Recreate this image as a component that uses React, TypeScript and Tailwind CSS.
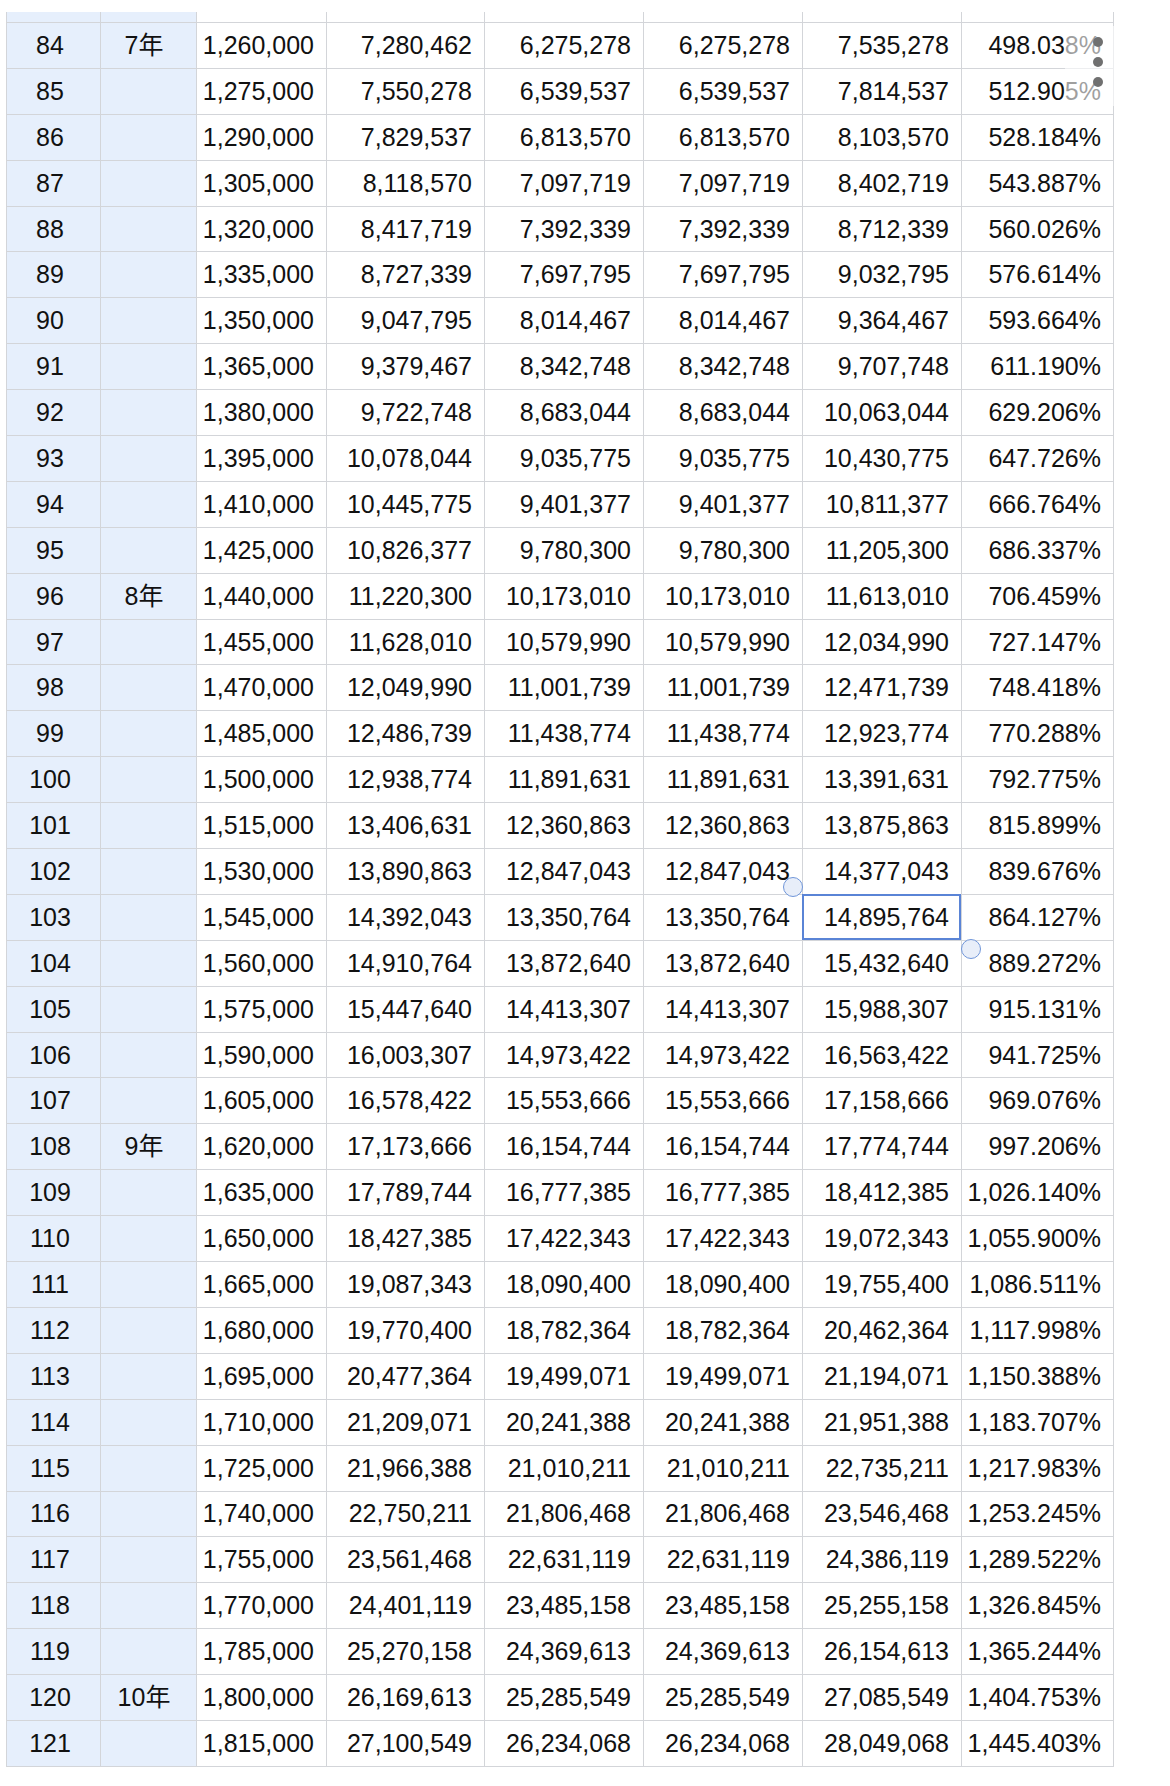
import React from "react";

const rows: [string, string, string, string, string, string, string, string][] = [
  ["84", "7年", "1,260,000", "7,280,462", "6,275,278", "6,275,278", "7,535,278", "498.038%"],
  ["85", "", "1,275,000", "7,550,278", "6,539,537", "6,539,537", "7,814,537", "512.905%"],
  ["86", "", "1,290,000", "7,829,537", "6,813,570", "6,813,570", "8,103,570", "528.184%"],
  ["87", "", "1,305,000", "8,118,570", "7,097,719", "7,097,719", "8,402,719", "543.887%"],
  ["88", "", "1,320,000", "8,417,719", "7,392,339", "7,392,339", "8,712,339", "560.026%"],
  ["89", "", "1,335,000", "8,727,339", "7,697,795", "7,697,795", "9,032,795", "576.614%"],
  ["90", "", "1,350,000", "9,047,795", "8,014,467", "8,014,467", "9,364,467", "593.664%"],
  ["91", "", "1,365,000", "9,379,467", "8,342,748", "8,342,748", "9,707,748", "611.190%"],
  ["92", "", "1,380,000", "9,722,748", "8,683,044", "8,683,044", "10,063,044", "629.206%"],
  ["93", "", "1,395,000", "10,078,044", "9,035,775", "9,035,775", "10,430,775", "647.726%"],
  ["94", "", "1,410,000", "10,445,775", "9,401,377", "9,401,377", "10,811,377", "666.764%"],
  ["95", "", "1,425,000", "10,826,377", "9,780,300", "9,780,300", "11,205,300", "686.337%"],
  ["96", "8年", "1,440,000", "11,220,300", "10,173,010", "10,173,010", "11,613,010", "706.459%"],
  ["97", "", "1,455,000", "11,628,010", "10,579,990", "10,579,990", "12,034,990", "727.147%"],
  ["98", "", "1,470,000", "12,049,990", "11,001,739", "11,001,739", "12,471,739", "748.418%"],
  ["99", "", "1,485,000", "12,486,739", "11,438,774", "11,438,774", "12,923,774", "770.288%"],
  ["100", "", "1,500,000", "12,938,774", "11,891,631", "11,891,631", "13,391,631", "792.775%"],
  ["101", "", "1,515,000", "13,406,631", "12,360,863", "12,360,863", "13,875,863", "815.899%"],
  ["102", "", "1,530,000", "13,890,863", "12,847,043", "12,847,043", "14,377,043", "839.676%"],
  ["103", "", "1,545,000", "14,392,043", "13,350,764", "13,350,764", "14,895,764", "864.127%"],
  ["104", "", "1,560,000", "14,910,764", "13,872,640", "13,872,640", "15,432,640", "889.272%"],
  ["105", "", "1,575,000", "15,447,640", "14,413,307", "14,413,307", "15,988,307", "915.131%"],
  ["106", "", "1,590,000", "16,003,307", "14,973,422", "14,973,422", "16,563,422", "941.725%"],
  ["107", "", "1,605,000", "16,578,422", "15,553,666", "15,553,666", "17,158,666", "969.076%"],
  ["108", "9年", "1,620,000", "17,173,666", "16,154,744", "16,154,744", "17,774,744", "997.206%"],
  ["109", "", "1,635,000", "17,789,744", "16,777,385", "16,777,385", "18,412,385", "1,026.140%"],
  ["110", "", "1,650,000", "18,427,385", "17,422,343", "17,422,343", "19,072,343", "1,055.900%"],
  ["111", "", "1,665,000", "19,087,343", "18,090,400", "18,090,400", "19,755,400", "1,086.511%"],
  ["112", "", "1,680,000", "19,770,400", "18,782,364", "18,782,364", "20,462,364", "1,117.998%"],
  ["113", "", "1,695,000", "20,477,364", "19,499,071", "19,499,071", "21,194,071", "1,150.388%"],
  ["114", "", "1,710,000", "21,209,071", "20,241,388", "20,241,388", "21,951,388", "1,183.707%"],
  ["115", "", "1,725,000", "21,966,388", "21,010,211", "21,010,211", "22,735,211", "1,217.983%"],
  ["116", "", "1,740,000", "22,750,211", "21,806,468", "21,806,468", "23,546,468", "1,253.245%"],
  ["117", "", "1,755,000", "23,561,468", "22,631,119", "22,631,119", "24,386,119", "1,289.522%"],
  ["118", "", "1,770,000", "24,401,119", "23,485,158", "23,485,158", "25,255,158", "1,326.845%"],
  ["119", "", "1,785,000", "25,270,158", "24,369,613", "24,369,613", "26,154,613", "1,365.244%"],
  ["120", "10年", "1,800,000", "26,169,613", "25,285,549", "25,285,549", "27,085,549", "1,404.753%"],
  ["121", "", "1,815,000", "27,100,549", "26,234,068", "26,234,068", "28,049,068", "1,445.403%"],
];

const font = {
  fontFamily: '"Liberation Sans", Arial, "Noto Sans CJK JP", sans-serif',
};

export default function App() {
  return (
    <div className="relative w-[1170px] h-[1786px] bg-white overflow-hidden" style={font}>
      <div className="pt-[12px] pl-[6px]">
        <div className="relative grid w-fit grid-cols-[93px_95px_129px_157px_158px_158px_158px_151px] gap-px bg-[#d3d5d9] px-px pb-px text-[25px] leading-none text-[#111111]">
          {/* partially visible header row */}
          {Array.from({ length: 8 }).map((_, i) => (
            <div
              key={"h" + i}
              className={`h-[10px] ${i < 2 ? "bg-[#e6effc]" : "bg-white"}`}
            />
          ))}
          {rows.map((r, ri) =>
            r.map((c, ci) => {
              const selected = r[0] === "103" && ci === 6;
              if (ci === 0)
                return (
                  <div key={ri + "-" + ci} className="h-[44.9px] bg-[#e6effc] flex items-center justify-center pr-[7px]">
                    {c}
                  </div>
                );
              if (ci === 1)
                return (
                  <div key={ri + "-" + ci} className="h-[44.9px] bg-[#e6effc] flex items-center justify-center pr-[9px]">
                    {c}
                  </div>
                );
              return (
                <div
                  key={ri + "-" + ci}
                  className={`relative h-[44.9px] bg-white flex items-center justify-end pr-[12px] ${selected ? "z-10" : ""}`}
                >
                  {c}
                  {selected && (
                    <>
                      <div className="absolute -left-[1px] -top-[1px] right-0 bottom-0 border-[2.5px] border-[#5a84d6]" />
                      <div className="absolute -left-[20px] -top-[18px] w-[20px] h-[20px] rounded-full bg-[#e8eef9] border-[1.5px] border-[#7096d9]" />
                      <div className="absolute -right-[20px] -bottom-[19px] w-[20px] h-[20px] rounded-full bg-[#e8eef9] border-[1.5px] border-[#7096d9]" />
                    </>
                  )}
                </div>
              );
            })
          )}
        </div>
      </div>
      {/* fading overlay with menu dots at top right */}
      <div className="absolute left-[1065px] top-[26px] w-[49px] h-[80px] bg-white/60" />
      <div className="absolute left-[1093px] top-[37px] flex flex-col gap-[10px]">
        <div className="w-[10px] h-[10px] rounded-full bg-[#707070]" />
        <div className="w-[10px] h-[10px] rounded-full bg-[#707070]" />
        <div className="w-[10px] h-[10px] rounded-full bg-[#707070]" />
      </div>
    </div>
  );
}
